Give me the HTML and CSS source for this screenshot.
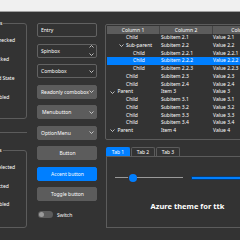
FILE: index.html
```html
<!DOCTYPE html>
<html lang="en">
<head>
  <meta charset="UTF-8" />
  <title>Azure theme for ttk</title>
  <link rel="stylesheet" href="styles.css">
</head>
<body>
  <div class="titlebar"></div>
  <div class="app">
    <!-- checkbuttons / radiobuttons -->
    <div class="col-left">
      <fieldset class="group checks">
        <legend>Checkbuttons</legend>
        <div class="opt"><span class="box"></span>Unchecked</div>
        <div class="opt"><span class="box on"></span>Checked</div>
        <div class="opt"><span class="box on"></span>Third State</div>
        <div class="opt"><span class="box off"></span>Disabled</div>
      </fieldset>
      <div class="sep"></div>
      <fieldset class="group radios">
        <legend>Radiobuttons</legend>
        <div class="opt"><span class="box round"></span>Unselected</div>
        <div class="opt"><span class="box round on"></span>Selected</div>
        <div class="opt"><span class="box round off"></span>Disabled</div>
      </fieldset>
    </div>

    <!-- input widgets -->
    <div class="col-mid">
      <div class="field">Entry</div>
      <div class="field">Spinbox
        <span class="arrows">
          <svg class="chev up" viewBox="0 0 5 3"><polyline points="0.5,2.5 2.5,0.5 4.5,2.5"/></svg>
          <svg class="chev" viewBox="0 0 5 3"><polyline points="0.5,0.5 2.5,2.5 4.5,0.5"/></svg>
        </span>
      </div>
      <div class="field">Combobox
        <svg class="chev" viewBox="0 0 5 3"><polyline points="0.5,0.5 2.5,2.5 4.5,0.5"/></svg>
      </div>
      <div class="field filled">Readonly combobox
        <svg class="chev" viewBox="0 0 5 3"><polyline points="0.5,0.5 2.5,2.5 4.5,0.5"/></svg>
      </div>
      <div class="field filled menu">Menubutton
        <svg class="chev" viewBox="0 0 5 3"><polyline points="0.5,0.5 2.5,2.5 4.5,0.5"/></svg>
      </div>
      <div class="field filled">OptionMenu
        <svg class="chev" viewBox="0 0 5 3"><polyline points="0.5,0.5 2.5,2.5 4.5,0.5"/></svg>
      </div>
      <div class="field filled btn">Button</div>
      <div class="field accent btn">Accent button</div>
      <div class="field filled btn">Toggle button</div>
      <div class="switch"><span class="track"><span class="knob"></span></span>Switch</div>
    </div>

    <!-- treeview + notebook -->
    <div class="col-right">
      <div class="tree">
        <div class="thead"><div>Column 1</div><div>Column 2</div><div>Column 3</div></div>
        <div class="tr"><div class="c1 lv1">Child</div><div class="c2">Subitem 2.1</div><div class="c3">Value 2.1</div></div>
        <div class="tr"><div class="c1 lv1p"><svg class="chev" viewBox="0 0 5 3"><polyline points="0.5,0.5 2.5,2.5 4.5,0.5"/></svg>Sub-parent</div><div class="c2">Subitem 2.2</div><div class="c3">Value 2.2</div></div>
        <div class="tr"><div class="c1 lv2">Child</div><div class="c2">Subitem 2.2.1</div><div class="c3">Value 2.2.1</div></div>
        <div class="tr sel"><div class="c1 lv2">Child</div><div class="c2">Subitem 2.2.2</div><div class="c3">Value 2.2.2</div></div>
        <div class="tr"><div class="c1 lv2">Child</div><div class="c2">Subitem 2.2.3</div><div class="c3">Value 2.2.3</div></div>
        <div class="tr"><div class="c1 lv1">Child</div><div class="c2">Subitem 2.3</div><div class="c3">Value 2.3</div></div>
        <div class="tr"><div class="c1 lv1">Child</div><div class="c2">Subitem 2.4</div><div class="c3">Value 2.4</div></div>
        <div class="tr"><div class="c1 lv0"><svg class="chev" viewBox="0 0 5 3"><polyline points="0.5,0.5 2.5,2.5 4.5,0.5"/></svg>Parent</div><div class="c2">Item 3</div><div class="c3">Value 3</div></div>
        <div class="tr"><div class="c1 lv1">Child</div><div class="c2">Subitem 3.1</div><div class="c3">Value 3.1</div></div>
        <div class="tr"><div class="c1 lv1">Child</div><div class="c2">Subitem 3.2</div><div class="c3">Value 3.2</div></div>
        <div class="tr"><div class="c1 lv1">Child</div><div class="c2">Subitem 3.3</div><div class="c3">Value 3.3</div></div>
        <div class="tr"><div class="c1 lv1">Child</div><div class="c2">Subitem 3.4</div><div class="c3">Value 3.4</div></div>
        <div class="tr"><div class="c1 lv0"><svg class="chev" viewBox="0 0 5 3"><polyline points="0.5,0.5 2.5,2.5 4.5,0.5"/></svg>Parent</div><div class="c2">Item 4</div><div class="c3">Value 4</div></div>
      </div>

      <div class="tabs">
        <div class="tab on">Tab 1</div>
        <div class="tab">Tab 2</div>
        <div class="tab">Tab 3</div>
      </div>
      <div class="pane">
        <div class="controls">
          <div class="scale">
            <span class="line done"></span>
            <span class="thumb"></span>
            <span class="line rest"></span>
          </div>
          <div class="progress"></div>
        </div>
        <div class="title">Azure theme for ttk</div>
      </div>
    </div>
  </div>
</body>
</html>
```

FILE: styles.css
```css
body {
  margin: 0;
  width: 240px;
  height: 240px;
  overflow: hidden;
  background: #333333;
  color: #ffffff;
  font-family: "Noto Sans", "DejaVu Sans", sans-serif;
  font-size: 5px;
  line-height: 6px;
}
.titlebar {
  height: 11px;
  background: #f0f0f0;
  border-bottom: 1px solid #a0a0a0;
}
.app {
  display: flex;
  align-items: flex-start;
}

/* left column: label frames */
.col-left {
  flex: 0 0 61px;
  margin-left: -34px;
  padding-top: 8px;
  display: flex;
  flex-direction: column;
}
.group {
  margin: 0;
  padding: 4.5px 0 11.5px 0;
  min-width: 0;
  border: 1px solid #5c5c5c;
  border-radius: 3px;
}
.group legend {
  padding: 0 1px;
  margin-left: 2px;
  line-height: 6px;
}
.opt {
  display: flex;
  align-items: center;
  gap: 3.5px;
  height: 19px;
  margin-left: 11.5px;
  white-space: nowrap;
}
.box {
  width: 7px;
  height: 7px;
  box-sizing: border-box;
  border: 1px solid #8a8a8a;
  border-radius: 1.5px;
}
.box.on {
  background: #007fff;
  border-color: #007fff;
}
.box.off {
  border-color: #5c5c5c;
}
.box.round {
  border-radius: 50%;
}
.sep {
  height: 1px;
  background: #5c5c5c;
  margin-top: 12.5px;
}
.radios {
  margin-top: 14.5px;
  padding: 4.75px 0 13.75px 0;
}
.radios .opt {
  height: 18.5px;
}

/* middle column */
.col-mid {
  flex: 0 0 60px;
  margin-left: 10px;
  padding-top: 11px;
  display: flex;
  flex-direction: column;
  gap: 6.5px;
}
.field {
  height: 14px;
  box-sizing: border-box;
  border: 1px solid #626262;
  border-radius: 2px;
  display: flex;
  align-items: center;
  justify-content: space-between;
  padding: 0 2px 0 3px;
  white-space: nowrap;
}
.filled {
  background: #5c5c5c;
  border-color: #5c5c5c;
}
.menu {
  padding-left: 4px;
}
.btn {
  justify-content: center;
}
.accent {
  background: #007fff;
  border-color: #007fff;
}
.chev {
  width: 5px;
  height: 3px;
  flex: 0 0 5px;
  fill: none;
  stroke: #e0e0e0;
  stroke-width: 0.8;
}
.arrows {
  display: flex;
  flex-direction: column;
  gap: 2.5px;
}
.switch {
  display: flex;
  align-items: center;
  gap: 4px;
  height: 14px;
  padding-left: 1px;
}
.track {
  width: 15px;
  height: 7px;
  box-sizing: border-box;
  padding: 0 1px;
  border-radius: 4px;
  background: #5c5c5c;
  display: flex;
  align-items: center;
}
.knob {
  width: 5px;
  height: 5px;
  border-radius: 50%;
  background: #9a9a9a;
}

/* right column: treeview */
.col-right {
  flex: 0 0 170px;
  margin-left: 8px;
  padding-top: 12px;
}
.tree {
  height: 115.5px;
  box-sizing: border-box;
  border: 1px solid #5c5c5c;
  border-radius: 2px;
  padding: 1px;
  overflow: hidden;
}
.thead,
.tr {
  display: grid;
  grid-template-columns: 52px 53px 60px;
  white-space: nowrap;
}
.thead {
  height: 8px;
  line-height: 8px;
  background: #5c5c5c;
  text-align: center;
}
.thead div + div {
  border-left: 1px solid #454545;
}
.tr {
  height: 7.75px;
  line-height: 7.75px;
}
.tr.sel {
  background: #007fff;
}
.c1 {
  display: flex;
  align-items: center;
}
.c1 .chev {
  margin-right: 2.5px;
}
.lv0 { padding-left: 3px; }
.lv1p { padding-left: 11.5px; }
.lv1 { padding-left: 19px; }
.lv2 { padding-left: 26px; }
.c2 { padding-left: 2px; }
.c3 { padding-left: 1px; }

/* notebook */
.tabs {
  display: flex;
  gap: 1px;
  height: 9px;
  margin: 7.5px 0 0 1px;
}
.tab {
  width: 24px;
  box-sizing: border-box;
  border: 1px solid #5c5c5c;
  border-bottom: none;
  border-radius: 2px 2px 0 0;
  text-align: center;
  line-height: 8px;
}
.tab.on {
  background: #007fff;
  border-color: #007fff;
}
.pane {
  width: 163px;
  height: 72px;
  box-sizing: border-box;
  margin-left: 1px;
  border: 1px solid #5c5c5c;
}
.controls {
  display: flex;
  align-items: center;
  height: 9px;
  margin-top: 16px;
}
.scale {
  width: 68px;
  margin-left: 8px;
  display: flex;
  align-items: center;
}
.line {
  height: 1.5px;
  background: #9a9a9a;
}
.line.done {
  width: 14px;
}
.line.rest {
  flex: 1;
}
.thumb {
  width: 8px;
  height: 8px;
  border-radius: 50%;
  background: #007fff;
  box-shadow: 0 0 0 1px #3a3030;
}
.progress {
  flex: 1;
  height: 4px;
  box-sizing: border-box;
  margin-left: 8px;
  border: 1px solid #0d3b6b;
  background: #007fff;
}
.title {
  margin-top: 19px;
  text-align: center;
  font-size: 7.5px;
  line-height: 10px;
  font-weight: bold;
}
```
